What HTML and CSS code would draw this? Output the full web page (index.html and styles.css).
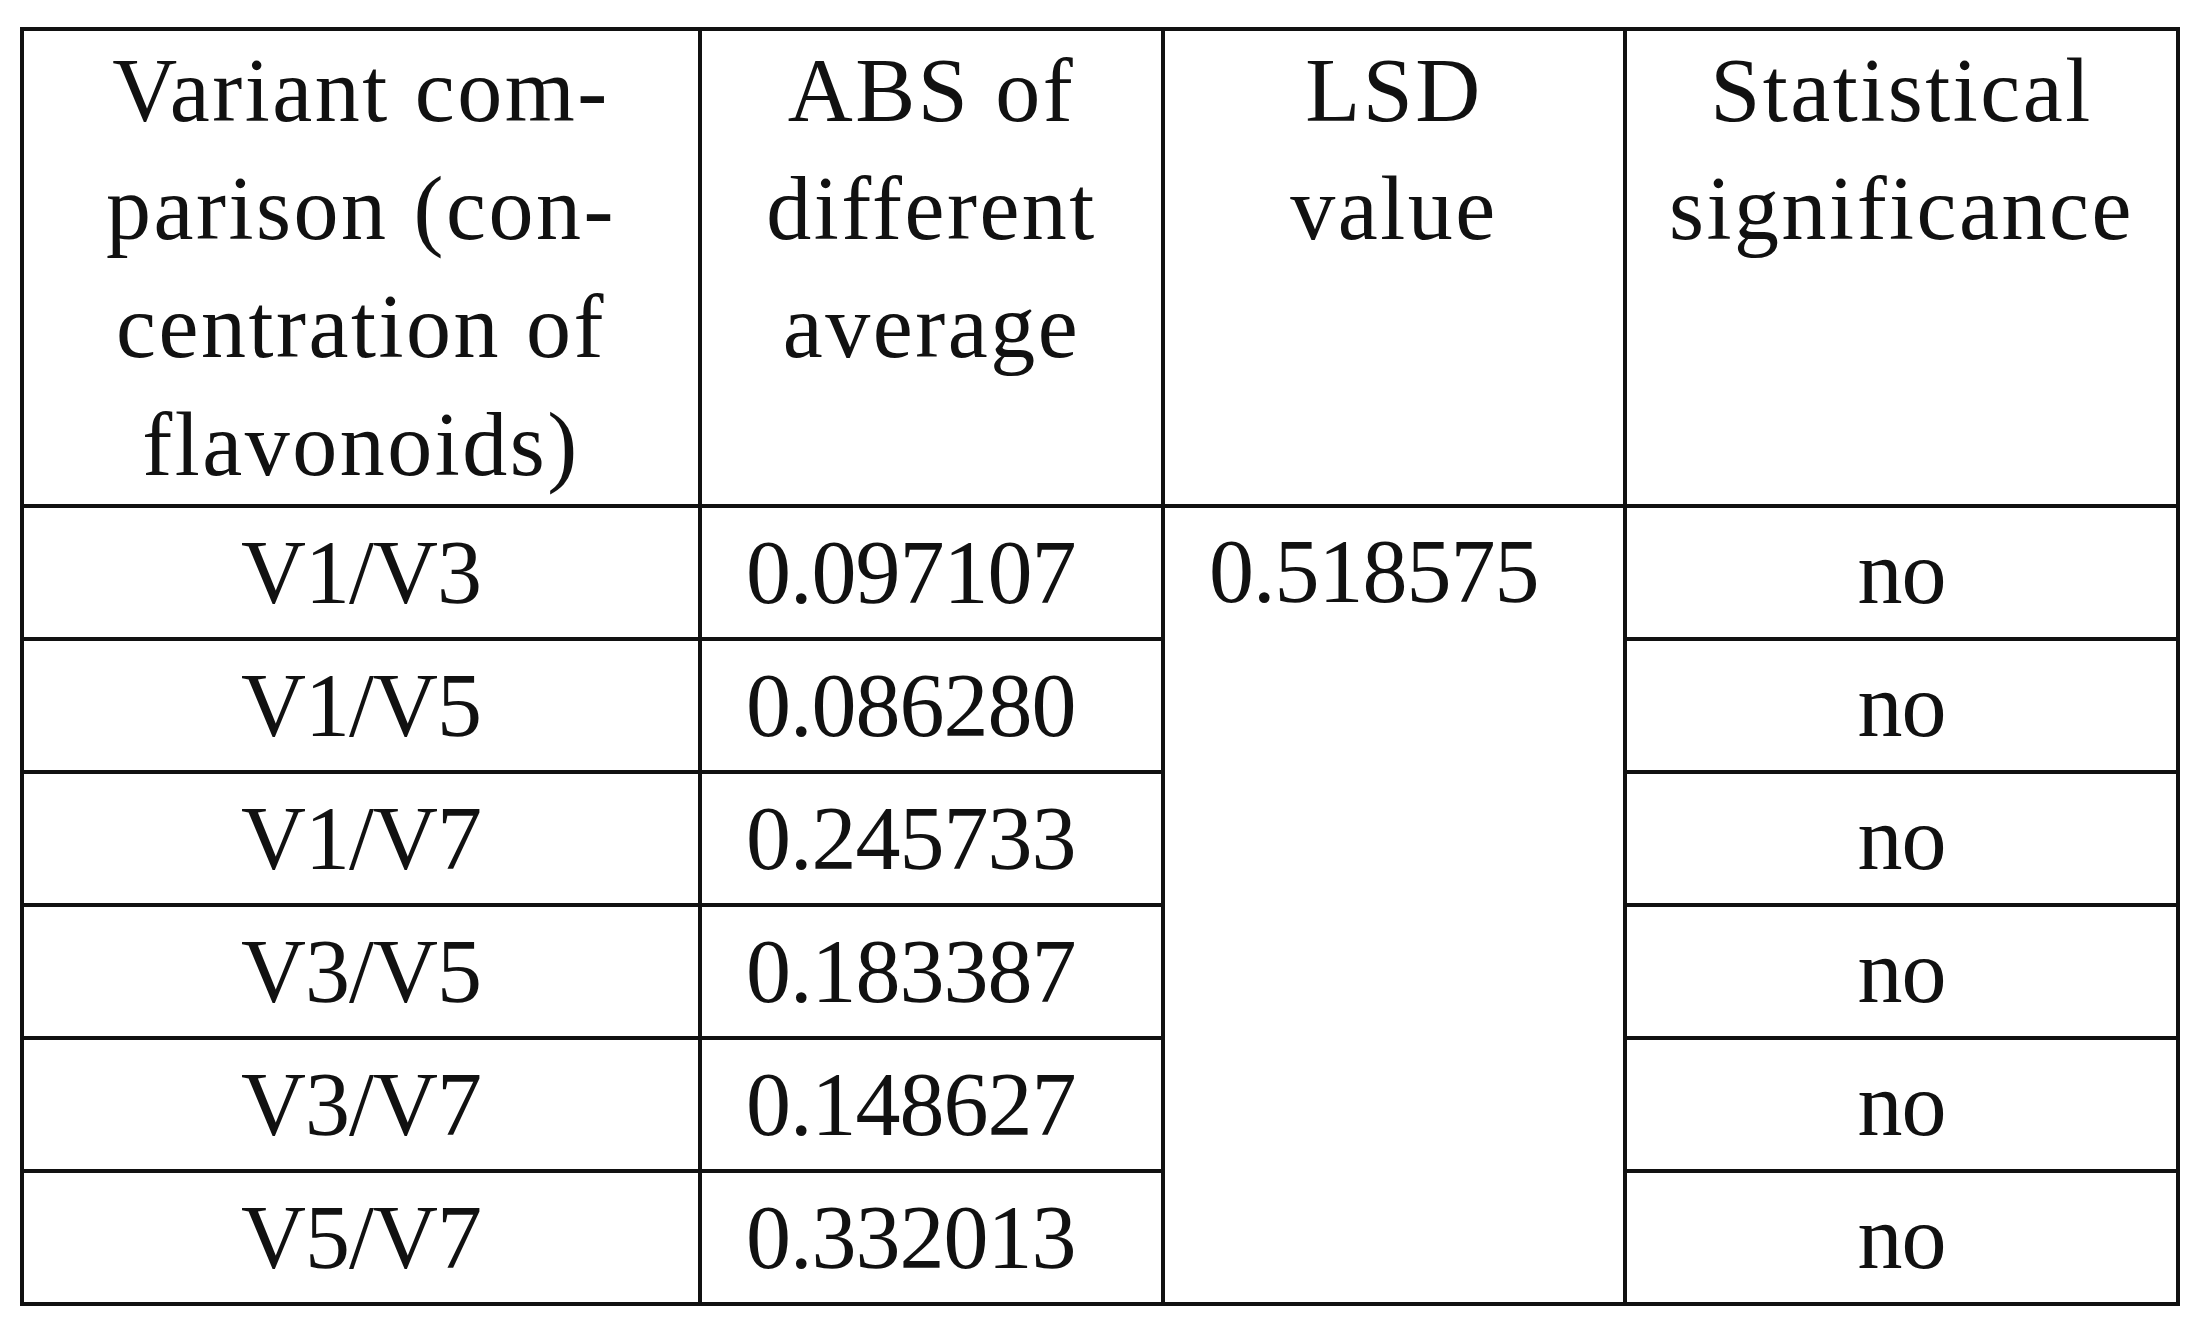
FILE: index.html
```html
<!DOCTYPE html>
<html>
<head>
    <meta charset="UTF-8">
    <title>LSD test of flavonoid concentration</title>
    <link rel="stylesheet" href="styles.css">
</head>
<body>
    <div class="wrap">
        <table class="lsd-table">
            <colgroup>
                <col class="col-variant">
                <col class="col-abs">
                <col class="col-lsd">
                <col class="col-sig">
            </colgroup>
            <thead>
                <tr class="head-row">
                    <th>Variant com-<br>parison (con-<br>centration of<br>flavonoids)</th>
                    <th>ABS of<br>different<br>average</th>
                    <th>LSD<br>value</th>
                    <th>Statistical<br>significance</th>
                </tr>
            </thead>
            <tbody>
                <tr>
                    <td class="pair">V1/V3</td>
                    <td class="num">0.097107</td>
                    <td class="lsd" rowspan="6">0.518575</td>
                    <td class="sig">no</td>
                </tr>
                <tr>
                    <td class="pair">V1/V5</td>
                    <td class="num">0.086280</td>
                    <td class="sig">no</td>
                </tr>
                <tr>
                    <td class="pair">V1/V7</td>
                    <td class="num">0.245733</td>
                    <td class="sig">no</td>
                </tr>
                <tr>
                    <td class="pair">V3/V5</td>
                    <td class="num">0.183387</td>
                    <td class="sig">no</td>
                </tr>
                <tr>
                    <td class="pair">V3/V7</td>
                    <td class="num">0.148627</td>
                    <td class="sig">no</td>
                </tr>
                <tr>
                    <td class="pair">V5/V7</td>
                    <td class="num">0.332013</td>
                    <td class="sig">no</td>
                </tr>
            </tbody>
        </table>
    </div>
</body>
</html>
```

FILE: styles.css
```css
body {
    margin: 0;
    background: #fff;
    color: #111;
    font-family: "Liberation Serif", "Times New Roman", serif;
}

.wrap {
    padding: 27px 0 0 20px;
}

.lsd-table {
    border-collapse: collapse;
    table-layout: fixed;
    width: 2156px;
    font-size: 90px;
}

.col-variant { width: 678px; }
.col-abs { width: 463px; }
.col-lsd { width: 462px; }
.col-sig { width: 553px; }

.lsd-table th,
.lsd-table td {
    border: 4px solid #111;
    padding: 0;
}

.lsd-table th {
    font-weight: normal;
    vertical-align: top;
    text-align: center;
    line-height: 118px;
    letter-spacing: 2.5px;
    padding-top: 1px;
}

.head-row {
    height: 471px;
}

.lsd-table tbody tr {
    height: 133px;
}

.lsd-table td {
    vertical-align: middle;
    letter-spacing: -1px;
}

.lsd-table .pair,
.lsd-table .sig {
    text-align: center;
}

.lsd-table .num {
    text-align: left;
    padding-left: 44px;
}

.lsd-table .lsd {
    vertical-align: top;
    padding: 12px 0 0 44px;
}
```
